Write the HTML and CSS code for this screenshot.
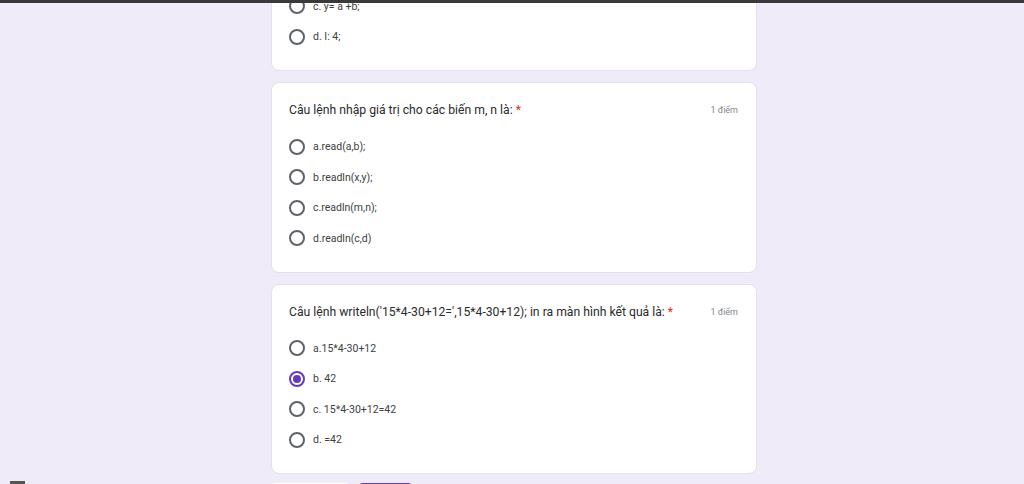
FILE: index.html
```html
<!DOCTYPE html>
<html lang="vi">
<head>
    <meta charset="UTF-8">
    <title>Bài kiểm tra</title>
    <link rel="stylesheet" href="styles.css">
</head>
<body>
    <div class="topbar"></div>
    <div class="form">
        <div class="card card-first">
            <div class="options">
                <div class="option"><span class="radio"></span><span>c. y= a +b;</span></div>
                <div class="option"><span class="radio"></span><span>d. I: 4;</span></div>
            </div>
        </div>

        <div class="card">
            <div class="question">
                <div class="title">Câu lệnh nhập giá trị cho các biến m, n là: <span class="req">*</span></div>
                <div class="points">1 điểm</div>
            </div>
            <div class="options">
                <div class="option"><span class="radio"></span><span>a.read(a,b);</span></div>
                <div class="option"><span class="radio"></span><span>b.readln(x,y);</span></div>
                <div class="option"><span class="radio"></span><span>c.readln(m,n);</span></div>
                <div class="option"><span class="radio"></span><span>d.readln(c,d)</span></div>
            </div>
        </div>

        <div class="card card-last">
            <div class="question">
                <div class="title">Câu lệnh writeln('15*4-30+12=',15*4-30+12); in ra màn hình kết quả là: <span class="req">*</span></div>
                <div class="points">1 điểm</div>
            </div>
            <div class="options">
                <div class="option"><span class="radio"></span><span>a.15*4-30+12</span></div>
                <div class="option"><span class="radio checked"></span><span>b. 42</span></div>
                <div class="option"><span class="radio"></span><span>c. 15*4-30+12=42</span></div>
                <div class="option"><span class="radio"></span><span>d. =42</span></div>
            </div>
        </div>

        <div class="actions">
            <button class="btn btn-back" aria-label="Quay lại"></button>
            <button class="btn btn-next" aria-label="Tiếp"></button>
        </div>
    </div>
    <div class="corner"></div>
</body>
</html>
```

FILE: styles.css
```css
body {
    margin: 0;
    background-color: #f0ebf8;
    font-family: Roboto, "Liberation Sans", sans-serif;
    color: #202124;
}

.topbar {
    position: fixed;
    top: 0;
    left: 0;
    right: 0;
    height: 3px;
    background-color: #3a3a3a;
    z-index: 2;
}

.form {
    width: 486px;
    margin-left: calc(50% - 241px);
}

.card {
    background-color: #ffffff;
    border: 1px solid #e4e0ec;
    border-radius: 8px;
    padding: 18px 18px 18px 17px;
    margin-bottom: 11px;
}

.card-first {
    margin-top: -28px;
}

.card-last {
    margin-bottom: 9px;
}

.question {
    display: flex;
    justify-content: space-between;
    align-items: center;
    height: 18px;
    margin-bottom: 12.5px;
}

.title {
    font-size: 12.2px;
    color: #2a2b2e;
}

.req {
    color: #d93025;
}

.points {
    font-size: 9px;
    color: #80868b;
}

.option {
    display: flex;
    align-items: center;
    height: 30.5px;
    font-size: 10.5px;
    color: #3c4043;
}

.radio {
    box-sizing: border-box;
    width: 16px;
    height: 16px;
    border: 2px solid #5f6368;
    border-radius: 50%;
    margin-right: 8px;
    display: flex;
    align-items: center;
    justify-content: center;
}

.radio.checked {
    border-color: #673ab7;
}

.radio.checked::after {
    content: "";
    width: 8px;
    height: 8px;
    border-radius: 50%;
    background-color: #673ab7;
}

.actions {
    display: flex;
    gap: 10px;
}

.btn {
    height: 36px;
    border: none;
    border-radius: 4px;
    padding: 0;
}

.btn-back {
    width: 78px;
    background-color: #ffffff;
}

.btn-next {
    width: 53px;
    background-color: #673ab7;
}

.corner {
    position: fixed;
    left: 10px;
    bottom: 0;
    width: 15px;
    height: 3px;
    background-color: #555555;
}
```
